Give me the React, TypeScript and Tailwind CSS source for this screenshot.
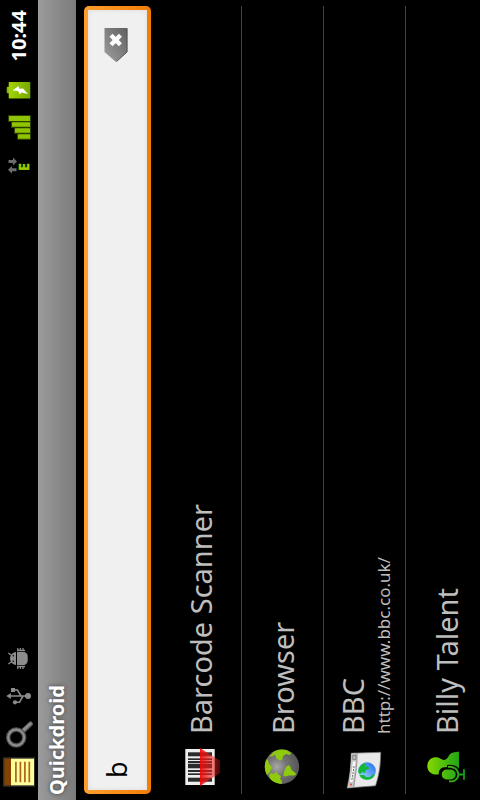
import { useState, type ReactNode } from "react";

/* Artwork is drawn for portrait and turned a quarter so it sits upright on the landscape screen. */
function Art({ size, children }: { size: number; children: ReactNode }) {
  const c = size / 2;
  return (
    <svg width={size} height={size} viewBox={`0 0 ${size} ${size}`} className="block shrink-0" aria-hidden="true">
      <g transform={`rotate(90 ${c} ${c})`}>{children}</g>
    </svg>
  );
}

function NoteIcon() {
  return (
    <Art size={38}>
      <rect x="3" y="4.3" width="32" height="29.4" fill="#33332c" />
      <rect x="4.5" y="5.7" width="7" height="26.6" fill="#874100" />
      <rect x="11" y="5.7" width="23" height="26.6" fill="#ffff99" />
      <path d="M15.9 8.7v20.6M20.4 8.7v20.6M24.9 8.7v20.6M29.3 8.7v20.6" stroke="#a8651c" strokeWidth="1.7" />
    </Art>
  );
}

function SearchIcon() {
  return (
    <Art size={38}>
      <path d="M23 16L30.5 9" stroke="#5c5c5c" strokeWidth="5" strokeLinecap="round" />
      <path d="M23.5 15L30.5 8.6" stroke="#8f8f8f" strokeWidth="2.6" strokeLinecap="round" />
      <circle cx="16.2" cy="22.5" r="8" fill="none" stroke="#555" strokeWidth="4.4" />
      <circle cx="16.2" cy="22.5" r="8" fill="none" stroke="#909090" strokeWidth="2" />
    </Art>
  );
}

function UsbIcon() {
  return (
    <Art size={38}>
      <g fill="#8c8c8c" stroke="none">
        <path d="M6.3 19l4.6-3v6z" />
        <circle cx="28" cy="19" r="3" />
        <rect x="11" y="11" width="4" height="4" />
        <circle cx="15" cy="25.3" r="2.1" />
      </g>
      <path d="M10 19H28M14 13h3.5l3.5 6M15 25.3h4.5l3.5-6.3" fill="none" stroke="#8c8c8c" strokeWidth="1.6" />
    </Art>
  );
}

function DebugIcon() {
  return (
    <Art size={38}>
      <g fill="#8c8c8c">
        <path d="M17 13h6.5a4.2 4.2 0 0 1 4.2 4.2v4.6a4.2 4.2 0 0 1-4.2 4.2H17z" />
        <path d="M16 13v13c-3.6-.6-6-3.4-6-6.5s2.4-5.9 6-6.5z" />
      </g>
      <circle cx="13.3" cy="16.8" r="0.8" fill="#000" />
      <circle cx="13.3" cy="22.2" r="0.8" fill="#000" />
      <path d="M8.3 14l3.7 2.5M8.3 25l3.7-2.5" stroke="#8c8c8c" strokeWidth="1.2" />
      <path
        d="M17.8 9v3M20.4 9v3M23 9v3M17.8 27v3M20.4 27v3M23 27v3M17 11.5h8M17 27.5h8"
        stroke="#8c8c8c"
        strokeWidth="1.3"
      />
    </Art>
  );
}

function DataIcon() {
  return (
    <svg width="38" height="38" viewBox="0 0 38 38" className="block shrink-0" role="img" aria-label="EDGE data">
      <g transform="rotate(90 19 19)" fill="#6c6c6c">
        <path d="M8.5 13h4.5v-2.6l4 4.1l-4 4.1v-2.6h-4.5z" />
        <path d="M16.5 24.3h-4.5v2.4l-4-3.9l4-3.9v2.4h4.5z" />
      </g>
      <text
        x="14"
        y="29"
        fontSize="14"
        fontWeight="700"
        fill="#99cc00"
        stroke="#99cc00"
        strokeWidth="0.5"
        className="font-['Open_Sans',sans-serif]"
      >
        E
      </text>
    </svg>
  );
}

function SignalIcon() {
  return (
    <Art size={38}>
      <path d="M8 6H31V31H17V25H14V19H11V13H8z" fill="#2c3d00" />
      <g fill="#8fc400">
        <rect x="9" y="7" width="21" height="5" rx="0.6" />
        <rect x="12" y="13.2" width="18" height="4.6" rx="0.6" />
        <rect x="15" y="19.2" width="15" height="4.6" rx="0.6" />
        <rect x="18" y="25.2" width="12" height="4.6" rx="0.6" />
      </g>
    </Art>
  );
}

function BatteryIcon() {
  return (
    <Art size={38}>
      <defs>
        <linearGradient id="battery" x1="0" y1="0" x2="1" y2="0">
          <stop offset="0" stopColor="#a2d400" />
          <stop offset="1" stopColor="#76a800" />
        </linearGradient>
      </defs>
      <rect x="6.7" y="15.7" width="4" height="6.6" rx="1" fill="#86b80a" />
      <rect x="8.7" y="11" width="21.6" height="16.5" rx="0.8" fill="url(#battery)" />
      <path d="M12.5 19.5L18.5 15l.8 2.7l3.7-.2L28 23l-6.5-1.6l-1.7 1.8l-1.8-3.2z" fill="#fff" />
    </Art>
  );
}

function BarcodeIcon() {
  return (
    <Art size={48}>
      <defs>
        <linearGradient id="beam" x1="0" y1="0" x2="1" y2="0">
          <stop offset="0" stopColor="#f00808" stopOpacity="0.95" />
          <stop offset="0.5" stopColor="#ee2020" stopOpacity="0.6" />
          <stop offset="0.7" stopColor="#f02020" stopOpacity="0.55" />
          <stop offset="1" stopColor="#b01010" stopOpacity="0.45" />
        </linearGradient>
      </defs>
      <rect x="9.3" y="6" width="29.4" height="36" fill="#eeeeee" />
      <g fill="#2b2b2b">
        <rect x="12" y="9.3" width="24" height="4" />
        <rect x="12" y="15.3" width="24" height="1.7" />
        <rect x="12" y="18" width="24" height="2.3" />
        <rect x="12" y="21" width="24" height="4.3" />
        <rect x="12" y="27" width="24" height="2" />
        <rect x="12" y="30.3" width="24" height="1.7" />
        <rect x="12" y="34.7" width="24" height="4" />
      </g>
      <path d="M24 5L44 17.7V30L24 43z" fill="url(#beam)" />
    </Art>
  );
}

function BrowserIcon() {
  return (
    <Art size={48}>
      <defs>
        <radialGradient id="globe" cx="0.35" cy="0.5" r="0.7">
          <stop offset="0" stopColor="#a8a8a8" />
          <stop offset="0.4" stopColor="#747474" />
          <stop offset="1" stopColor="#505050" />
        </radialGradient>
        <clipPath id="globeEdge">
          <circle cx="24" cy="23.7" r="17.2" />
        </clipPath>
      </defs>
      <circle cx="24" cy="23.7" r="17.2" fill="url(#globe)" />
      <g fill="#8fcb0c" clipPath="url(#globeEdge)">
        <path d="M11 13l3-2 2-4 8-1.5 5 1.5 4 3-1 2-4-1-3 2-1 4-3 .5-3-3-1-3-3 2z" />
        <path d="M5 21l3-5 2 1 1 4 3 3-2 5-3 3-3-2z" />
        <path d="M11 32l2-2 3 1 2-2 3 3 2 1-1 3 2 2-.5 5-4 0-6-3z" />
        <path d="M26 29l2-5 2.5-2 2 2 1 3 5 4-2 1.5-6 0-3 1-2-.5z" />
      </g>
    </Art>
  );
}

function BookmarkIcon() {
  return (
    <Art size={48}>
      <defs>
        <linearGradient id="sea" x1="0" y1="1" x2="1" y2="0">
          <stop offset="0" stopColor="#b5e4ff" />
          <stop offset="1" stopColor="#1768ee" />
        </linearGradient>
        <clipPath id="seaEdge">
          <circle cx="27" cy="28" r="8.8" />
        </clipPath>
      </defs>
      <path d="M11.3 10.2L40.7 9.3C40.5 24 39 32 35.5 42.8L7.2 45C10 33 11 22 11.3 10.2z" fill="#e9e9e9" stroke="#777" strokeWidth="0.8" />
      <path d="M11.3 10.5L17 10.3C17.5 22 15 34 13.8 44.3L7.5 44.7C10 33 11 22 11.3 10.5z" fill="#c4c4c4" />
      <path d="M17 10.3C17.5 22 15 34 13.8 44.3" fill="none" stroke="#888" strokeWidth="0.8" />
      <path d="M14.2 18.5C13.8 26 12.5 33 11.2 39" fill="none" stroke="#fafafa" strokeWidth="2.6" />
      <path d="M14 23C13.5 28 12.7 32 11.8 37" fill="none" stroke="#555" strokeWidth="0.9" strokeDasharray="2 1" />
      <rect x="12.8" y="12.3" width="3" height="4" fill="none" stroke="#777" strokeWidth="0.8" />
      <circle cx="11" cy="41.5" r="1.1" fill="#f05030" />
      <circle cx="27" cy="28" r="8.8" fill="url(#sea)" />
      <g fill="#12b83a" clipPath="url(#seaEdge)">
        <path d="M18 27l2-4 4-3 2 1-1 3 3-1 1 3-3 1-1 3-3-1-1 2-3-1z" />
        <path d="M19 32l5 0 2 2 4 0 3-3 3 1-3 5-7 2-6-3z" />
      </g>
    </Art>
  );
}

function ArtistIcon() {
  return (
    <Art size={48}>
      <defs>
        <linearGradient id="leaf" gradientUnits="userSpaceOnUse" x1="5" y1="0" x2="44" y2="0">
          <stop offset="0" stopColor="#86d800" />
          <stop offset="1" stopColor="#0c9a1c" />
        </linearGradient>
      </defs>
      <path
        d="M14 14.3C17.5 14.3 19 16.5 21.5 17C24 16.8 25.5 15.5 27 12.5C29 9.5 33 8.8 37 8.8V26L24 27.5L18 31C11 33 5.3 29 5.3 23.2C5.3 18 9 14.3 14 14.3z"
        fill="url(#leaf)"
      />
      <path d="M17.5 35C15 27 19 24 25 24L25 22C33 20.5 39 25 39 31H30z" fill="#000" />
      <rect x="19.7" y="26.5" width="14" height="10" rx="5" fill="url(#leaf)" />
      <path
        d="M26 23.8C32 23.3 36.3 26.5 36.3 31.5S32 39 27 38.3M36.3 31.5H41.7M42 26.3V36.7"
        fill="none"
        stroke="url(#leaf)"
        strokeWidth="1.8"
      />
    </Art>
  );
}

function ClearIcon() {
  return (
    <svg width="34" height="24" viewBox="0 0 34 24" className="block" aria-hidden="true">
      <defs>
        <linearGradient id="tag" x1="0" y1="0" x2="1" y2="1">
          <stop offset="0" stopColor="#a0a0a0" />
          <stop offset="1" stopColor="#606060" />
        </linearGradient>
      </defs>
      <path d="M34 .5V23.3H10L0 12L10 .5z" fill="url(#tag)" />
      <path d="M33.5 23H10L0.5 12.5" fill="none" stroke="#555" />
      <path d="M17.3 7l9.4 9.4M26.7 7L17.3 16.4" stroke="#fff" strokeWidth="4.4" />
    </svg>
  );
}

const results = [
  { title: "Barcode Scanner", icon: <BarcodeIcon /> },
  { title: "Browser", icon: <BrowserIcon /> },
  { title: "BBC", url: "http://www.bbc.co.uk/", icon: <BookmarkIcon /> },
  { title: "Billy Talent", icon: <ArtistIcon /> },
];

export default function App() {
  const [query, setQuery] = useState("b");

  return (
    <div className="h-screen w-screen overflow-hidden bg-black">
      <div className="flex h-[100vw] w-[100vh] origin-top-left translate-y-[100vh] -rotate-90 flex-col overflow-hidden bg-black font-['Noto_Sans','Open_Sans',sans-serif]">
        <header className="flex h-[38px] shrink-0 items-center justify-between pr-[10px] pl-[9px]">
          <div className="flex">
            <NoteIcon />
            <SearchIcon />
            <UsbIcon />
            <DebugIcon />
          </div>
          <div className="flex items-center">
            <DataIcon />
            <SignalIcon />
            <BatteryIcon />
            <time className="pl-[10px] text-[20px] leading-[38px] font-bold text-white">10:44</time>
          </div>
        </header>

        <h1 className="h-[38px] shrink-0 bg-linear-to-b from-[#9b9b9b] to-[#7b7b7b] pl-[5px] text-[20px] leading-[38px] font-bold text-white [text-shadow:0_0_4px_#404040]">
          Quickdroid
        </h1>

        <main className="flex flex-col px-[6px] pt-2">
          <form
            className="flex shrink-0 rounded-[5px] bg-linear-to-b from-[#ff9f2c] to-[#f27c00] p-1"
            onSubmit={(e) => e.preventDefault()}
          >
            <div className="flex h-[59px] grow items-center bg-[#f0f0f0] pr-[18px] pb-[3px] shadow-[inset_0_0_5px_#dcdcdc]">
              <input
                type="text"
                aria-label="Search"
                value={query}
                onChange={(e) => setQuery(e.target.value)}
                className="h-full min-w-0 grow bg-transparent pl-3 text-[27px] text-black outline-none"
              />
              <button type="button" aria-label="Clear" onClick={() => setQuery("")}>
                <ClearIcon />
              </button>
            </div>
          </form>

          <ul className="pt-[9px] text-[#bebebe]">
            {results.map((item) => (
              <li key={item.title} className="flex h-[82px] items-start border-b border-[#424242] pt-4 pl-[3px]">
                {item.icon}
                <div className={item.url ? "-mt-3 flex flex-col pl-[9px]" : "flex flex-col pl-[9px]"}>
                  <span className="text-[29px] leading-[50px] whitespace-nowrap">{item.title}</span>
                  {item.url && <span className="-mt-2 text-[17px] leading-[28px] whitespace-nowrap">{item.url}</span>}
                </div>
              </li>
            ))}
          </ul>
        </main>
      </div>
    </div>
  );
}
